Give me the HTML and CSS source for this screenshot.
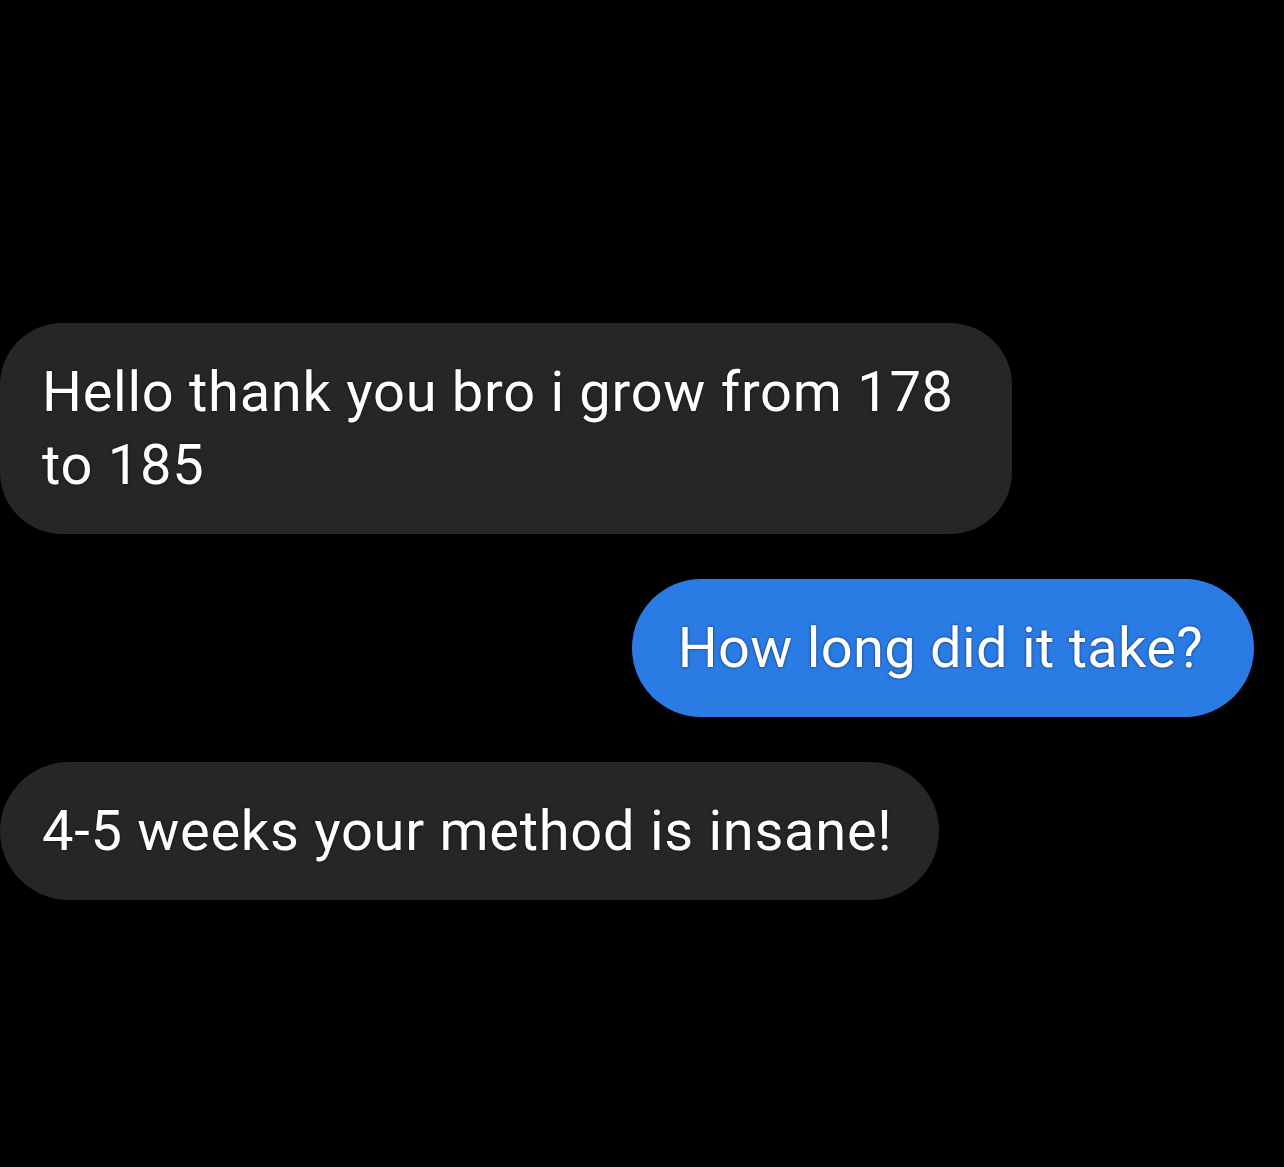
FILE: index.html
```html
<!DOCTYPE html>
<html lang="en">
<head>
  <meta charset="UTF-8" />
  <meta name="viewport" content="width=device-width, initial-scale=1.0"/>
  <title>Messages</title>
  <link rel="stylesheet" href="styles.css">
</head>
<body>

  <div class="chat">
    <div class="msg in wide">Hello thank you bro i grow from 178 to 185</div>
    <div class="msg out">How long did it take?</div>
    <div class="msg in">4-5 weeks your method is insane!</div>
  </div>

</body>
</html>
```

FILE: styles.css
```css
body {
  margin: 0;
  background: #000;
  font-family: Roboto, "Liberation Sans", Arial, sans-serif;
  height: 100vh;
}
.chat {
  display: flex;
  flex-direction: column;
  gap: 45px;
  padding-top: 323px;
}
.msg {
  box-sizing: border-box;
  width: fit-content;
  font-size: 56px;
  line-height: 73px;
  color: #fff;
  text-shadow: 0 0 3px rgba(0,0,0,0.6);
  padding: 33px 46px 32px 42px;
  border-radius: 69px;
}
.msg.in {
  background: #262626;
  align-self: flex-start;
  letter-spacing: 0.72px;
}
.msg.wide {
  max-width: 1012px;
  border-radius: 62px;
}
.msg.out {
  background: #2b7be5;
  align-self: flex-end;
  margin-right: 30px;
  padding-left: 46px;
  padding-right: 51px;
  letter-spacing: 0.3px;
}
```
